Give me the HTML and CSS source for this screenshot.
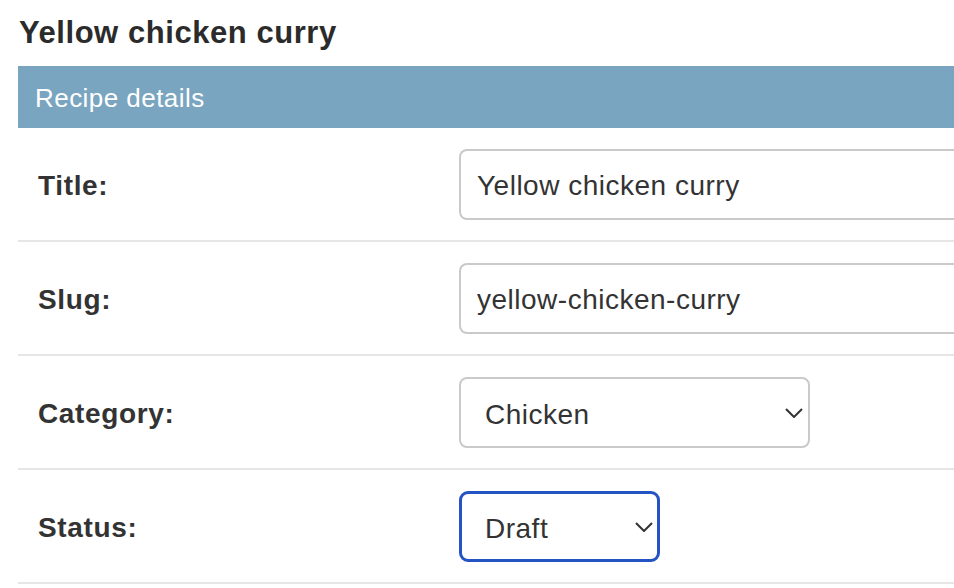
FILE: index.html
```html
<!DOCTYPE html>
<html lang="en">
<head>
<meta charset="utf-8">
<title>Yellow chicken curry</title>
<link rel="stylesheet" href="styles.css">
</head>
<body>
<main class="content">
  <h1 class="page-title">Yellow chicken curry</h1>
  <form class="recipe-form">
    <fieldset class="module">
      <h2 class="caption">Recipe details</h2>
      <div class="form-row">
        <label class="field-label" for="id_title">Title:</label>
        <div class="field-box">
          <input class="text-input" id="id_title" type="text" value="Yellow chicken curry">
        </div>
      </div>
      <div class="form-row">
        <label class="field-label" for="id_slug">Slug:</label>
        <div class="field-box">
          <input class="text-input" id="id_slug" type="text" value="yellow-chicken-curry">
        </div>
      </div>
      <div class="form-row">
        <label class="field-label" for="id_category">Category:</label>
        <div class="field-box">
          <span class="select-wrap select-category">
            <select class="select-input" id="id_category">
              <option>Chicken</option>
            </select>
            <svg class="chevron" width="18" height="10" viewBox="0 0 18 10"><path d="M1 1 L9 9 L17 1" fill="none" stroke="#333" stroke-width="2"/></svg>
          </span>
        </div>
      </div>
      <div class="form-row">
        <label class="field-label" for="id_status">Status:</label>
        <div class="field-box">
          <span class="select-wrap select-status">
            <select class="select-input focused" id="id_status">
              <option>Draft</option>
            </select>
            <svg class="chevron" width="18" height="10" viewBox="0 0 18 10"><path d="M1 1 L9 9 L17 1" fill="none" stroke="#333" stroke-width="2"/></svg>
          </span>
        </div>
      </div>
    </fieldset>
  </form>
</main>
</body>
</html>
```
FILE: styles.css
```css
html, body {
  margin: 0;
  padding: 0;
  background: #fff;
  overflow: hidden;
}
body {
  font-family: "Liberation Sans", Arial, sans-serif;
  color: #333;
  width: 954px;
  height: 588px;
}
.content {
  padding: 15px 0 0 18px;
}
.page-title {
  margin: 0 0 0 1px;
  font-size: 31px;
  line-height: 36px;
  font-weight: bold;
  letter-spacing: 0.55px;
  color: #2b2b2b;
}
.recipe-form {
  margin-top: 15px;
}
.module {
  margin: 0;
  padding: 0;
  border: 0;
  min-width: 0;
}
.caption {
  margin: 0;
  height: 62px;
  line-height: 64px;
  padding-left: 17px;
  background: #7aa5c0;
  color: #fff;
  font-size: 26px;
  font-weight: normal;
  letter-spacing: 0.45px;
}
.form-row {
  display: grid;
  grid-template-columns: 441px 1fr;
  align-items: center;
  padding: 21px 0 20px 0;
  border-bottom: 2px solid #e6e6e6;
}
.field-label {
  padding-left: 20px;
  padding-top: 2px;
  font-size: 28px;
  font-weight: bold;
  letter-spacing: 0.65px;
  color: #333;
}
.field-box {
  min-width: 0;
  overflow: hidden;
}
.text-input {
  box-sizing: border-box;
  width: 520px;
  height: 71px;
  border: 2px solid #cacaca;
  border-right: 0;
  border-radius: 8px 0 0 8px;
  padding: 3px 0 0 16px;
  font-family: "Liberation Sans", Arial, sans-serif;
  font-size: 28px;
  letter-spacing: 0.5px;
  color: #333;
  background: #fff;
  outline: none;
  display: block;
}
.select-wrap {
  position: relative;
  display: block;
}
.select-category { width: 351px; }
.select-status { width: 201px; }
.select-input {
  -webkit-appearance: none;
  appearance: none;
  box-sizing: border-box;
  width: 100%;
  height: 71px;
  border: 2px solid #cacaca;
  border-radius: 8px;
  padding: 3px 0 0 24px;
  font-family: "Liberation Sans", Arial, sans-serif;
  font-size: 28px;
  letter-spacing: 0.5px;
  color: #333;
  background: #fff;
  outline: none;
  display: block;
}
.select-input.focused {
  border: 3px solid #2453c3;
  border-radius: 9px;
  padding-left: 23px;
}
.chevron {
  position: absolute;
  right: 7px;
  top: 31px;
  pointer-events: none;
}
```
